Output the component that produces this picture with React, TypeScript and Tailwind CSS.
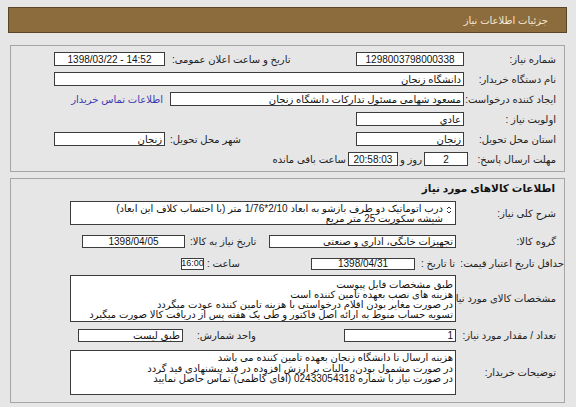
import React from "react";

function Spin() {
  return (
    <svg width="6" height="10" viewBox="0 0 6 10" className="absolute right-[3px] top-[3px]">
      <path d="M1 4 L3 2 L5 4" fill="none" stroke="#333" strokeWidth="1" />
      <path d="M1 6 L3 8 L5 6" fill="none" stroke="#333" strokeWidth="1" />
    </svg>
  );
}

export default function App() {
  return (
    <div
      dir="rtl"
      className="w-[576px] h-[407px] bg-[#e6e6e6] overflow-hidden font-['Liberation_Sans','DejaVu_Sans',sans-serif] text-[10px] text-[#222] flex flex-col"
    >
      {/* header */}
      <div className="mt-[7px] mr-[9px] ml-[8px] h-[26px] bg-[#8c6b3d] border border-[#5a4528] flex items-center pr-[18px] text-[#f3ead8] text-[10px]">
        جزئیات اطلاعات نیاز
      </div>

      {/* section 1 */}
      <div className="mt-[12px] mr-[11px] ml-[10px] border border-[#a6a6a6] pt-[3px] pb-[2px] flex flex-col">
        <div className="h-[20px] flex items-center">
          <div className="w-[100px] shrink-0 pr-[8px]">شماره نیاز:</div>
          <div className="w-[108px] h-[14px] shrink-0 bg-white border border-[#3c3c3c] flex items-center justify-center text-[#111]">1298003798000338</div>
          <div className="w-[191px] shrink-0 text-left pl-[7px]">تاریخ و ساعت اعلان عمومی:</div>
          <div dir="ltr" className="w-[111px] h-[14px] shrink-0 bg-white border border-[#3c3c3c] flex items-center justify-center text-[#111]">1398/03/22 - 14:52</div>
        </div>
        <div className="h-[20px] flex items-center">
          <div className="w-[100px] shrink-0 pr-[8px]">نام دستگاه خریدار:</div>
          <div className="w-[410px] h-[14px] shrink-0 bg-white border border-[#3c3c3c] flex items-center pr-[2px] text-[#111]">دانشگاه زنجان</div>
        </div>
        <div className="h-[20px] flex items-center">
          <div className="w-[100px] shrink-0 pr-[8px] whitespace-nowrap">ایجاد کننده درخواست:</div>
          <div className="w-[294px] h-[14px] shrink-0 bg-white border border-[#3c3c3c] flex items-center pr-[2px] text-[#111] whitespace-nowrap overflow-hidden">مسعود شهامی مسئول تدارکات دانشگاه زنجان</div>
          <div className="mr-[7px] text-[#3b3bb0]">اطلاعات تماس خریدار</div>
        </div>
        <div className="h-[20px] flex items-center">
          <div className="w-[100px] shrink-0 pr-[8px]">اولویت نیاز :</div>
          <div className="w-[108px] h-[14px] shrink-0 bg-white border border-[#3c3c3c] flex items-center pr-[2px] text-[#111]">عادي</div>
        </div>
        <div className="h-[20px] flex items-center">
          <div className="w-[100px] shrink-0 pr-[8px]">استان محل تحویل:</div>
          <div className="w-[108px] h-[14px] shrink-0 bg-white border border-[#3c3c3c] flex items-center pr-[2px] text-[#111]">زنجان</div>
          <div className="w-[191px] shrink-0 text-left pl-[5px]">شهر محل تحویل:</div>
          <div className="w-[111px] h-[14px] shrink-0 bg-white border border-[#3c3c3c] flex items-center pr-[2px] text-[#111]">زنجان</div>
        </div>
        <div className="h-[20px] flex items-center">
          <div className="w-[96px] shrink-0 pr-[8px]">مهلت ارسال پاسخ:</div>
          <div className="w-[44px] h-[14px] shrink-0 bg-white border border-[#3c3c3c] flex items-center justify-center text-[#111]">2</div>
          <div className="mr-[2px] shrink-0 whitespace-nowrap">روز و</div>
          <div className="mr-[2px] w-[50px] h-[14px] shrink-0 bg-white border border-[#3c3c3c] flex items-center justify-center text-[#111]">20:58:03</div>
          <div className="mr-[2px] whitespace-nowrap">ساعت باقی مانده</div>
        </div>
      </div>

      {/* section 2 */}
      <div className="mt-[6px] mr-[11px] ml-[10px] border border-[#a6a6a6] pb-[7px] flex flex-col">
        <div className="h-[20px] flex items-center pr-[9px] font-bold text-[10.5px] text-[#111]">اطلاعات کالاهای مورد نیاز</div>

        <div className="mt-[2px] flex items-center">
          <div className="w-[108px] shrink-0 pr-[8px]">شرح کلی نیاز:</div>
          <div className="relative w-[386px] h-[24px] shrink-0 bg-white border border-[#3c3c3c] pr-[12px] pt-[2px] leading-[10px] text-[#111]">
            <Spin />
            <div className="whitespace-nowrap">درب اتوماتیک دو طرف بازشو به ابعاد 2/10*1/76 متر (با احتساب کلاف این ابعاد)</div>
            <div>شیشه سکوریت 25 متر مربع</div>
          </div>
        </div>

        <div className="mt-[9px] flex items-center">
          <div className="w-[108px] shrink-0 pr-[8px]">گروه کالا:</div>
          <div className="w-[187px] h-[13px] shrink-0 bg-white border border-[#3c3c3c] flex items-center pr-[2px] text-[#111]">تجهیزات خانگی، اداری و صنعتی</div>
          <div className="w-[84px] shrink-0 text-left pl-[5px] whitespace-nowrap">تاریخ نیاز به کالا:</div>
          <div className="w-[103px] h-[13px] shrink-0 bg-white border border-[#3c3c3c] flex items-center justify-center text-[#111]">1398/04/05</div>
        </div>

        <div className="mt-[7px] flex items-center">
          <div className="w-[149px] shrink-0 flex justify-between pl-[6px] whitespace-nowrap">
            <span>حداقل تاریخ اعتبار قیمت:</span>
            <span>تا تاریخ :</span>
          </div>
          <div className="w-[104px] h-[12px] shrink-0 bg-white border border-[#3c3c3c] flex items-center justify-center text-[#111]">1398/04/31</div>
          <div className="w-[107px] shrink-0 text-left pl-[3px]">ساعت :</div>
          <div className="w-[23px] h-[12px] shrink-0 bg-white border border-[#3c3c3c] flex items-center justify-center text-[#111] text-[9px]">16:00</div>
        </div>

        <div className="mt-[4px] flex items-center">
          <div className="w-[108px] shrink-0 pr-[8px] whitespace-nowrap">مشخصات کالای مورد نیاز:</div>
          <div className="w-[386px] h-[47px] shrink-0 bg-white border border-[#3c3c3c] pr-[2px] pt-[4px] leading-[10px] text-[#111] overflow-hidden">
            <div className="whitespace-nowrap">طبق مشخصات فایل پیوست</div>
            <div className="whitespace-nowrap">هزینه های نصب بعهده تامین کننده است</div>
            <div className="whitespace-nowrap">در صورت مغایر بودن اقلام درخواستی با هزینه تامین کننده عودت میگردد</div>
            <div className="whitespace-nowrap">تسویه حساب منوط به ارائه اصل فاکتور و طی یک هفته پس از دریافت کالا صورت میگیرد</div>
          </div>
        </div>

        <div className="mt-[6px] flex items-center">
          <div className="w-[108px] shrink-0 pr-[8px] whitespace-nowrap">تعداد / مقدار مورد نیاز:</div>
          <div className="w-[112px] h-[13px] shrink-0 bg-white border border-[#3c3c3c] flex items-center pr-[2px] text-[#111]">1</div>
          <div className="w-[161px] shrink-0 text-left pl-[14px]">واحد شمارش:</div>
          <div className="w-[105px] h-[13px] shrink-0 bg-white border border-[#3c3c3c] flex items-center pr-[2px] text-[#111]">طبق لیست</div>
        </div>

        <div className="mt-[7px] flex items-center">
          <div className="w-[108px] shrink-0 pr-[8px]">توضیحات خریدار:</div>
          <div className="w-[386px] h-[45px] shrink-0 bg-white border border-[#3c3c3c] pr-[2px] pt-[2px] leading-[10.5px] text-[#111] overflow-hidden">
            <div className="whitespace-nowrap">هزینه ارسال تا دانشگاه زنجان بعهده تامین کننده می باشد</div>
            <div className="whitespace-nowrap">در صورت مشمول بودن، مالیات بر ارزش افزوده در قید پیشنهادی قید گردد</div>
            <div className="whitespace-nowrap">در صورت نیاز با شماره 02433054318 (آقای کاظمی) تماس حاصل نمایید</div>
          </div>
        </div>
      </div>
    </div>
  );
}
